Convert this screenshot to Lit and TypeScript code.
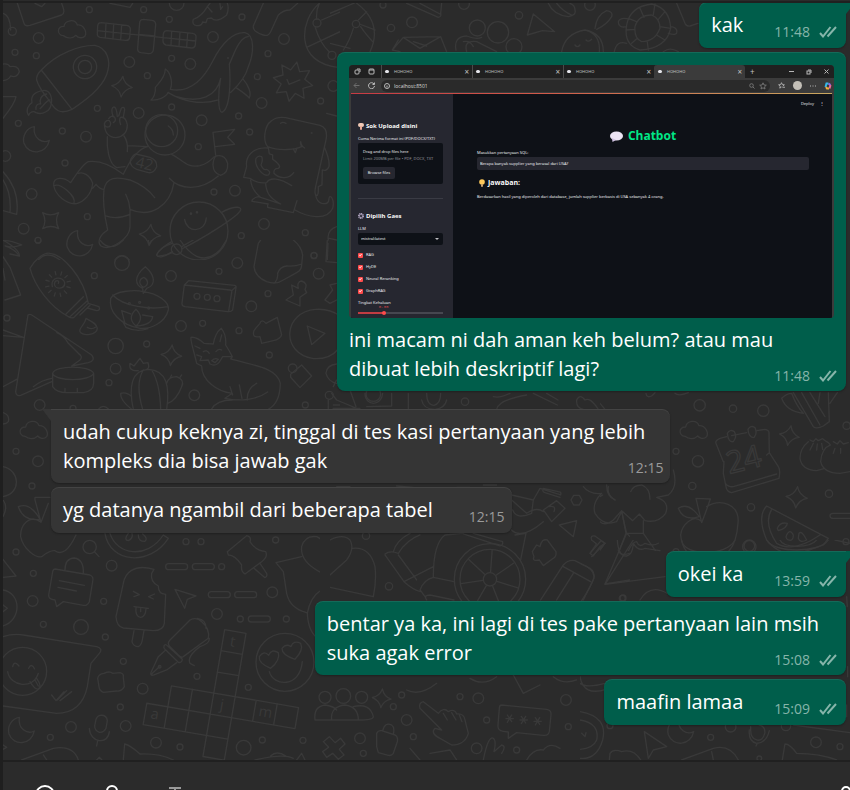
import { LitElement, html, css, svg, nothing } from "lit";
import { customElement, property } from "lit/decorators.js";

type Dot = [number, number, number?];

/** One region of the wallpaper, drawn at three units to the pixel. */
interface Region {
  x: number;
  y: number;
  w: number;
  h: number;
  paths: string[];
  dots: Dot[];
  stars?: [number, number, number, number?][];
  moons?: [number, number][];
  clouds?: [number, number][];
  pills?: [number, number][];
}

const spokes = (cx: number, cy: number, a: number, b: number, n: number) =>
  Array.from({ length: n }, (_, i) => {
    const t = (i * 2 * Math.PI) / n + 0.3;
    const c = Math.cos(t);
    const s = Math.sin(t);
    return `M${(cx + a * c).toFixed(1)} ${(cy + a * s).toFixed(1)}L${(cx + b * c).toFixed(1)} ${(cy + b * s).toFixed(1)}`;
  }).join("");

const burst = (cx: number, cy: number, a: number, b: number, n: number) =>
  "M" +
  Array.from({ length: n * 2 }, (_, i) => {
    const t = ((i + 0.5) * Math.PI) / n - Math.PI / 2;
    const r = i % 2 ? b : a;
    return `${(cx + r * Math.cos(t)).toFixed(1)} ${(cy + r * Math.sin(t)).toFixed(1)}`;
  }).join("L") +
  "Z";

const REGIONS: Region[] = [
  {
    x: 0,
    y: 0,
    w: 340,
    h: 260,
    paths: [
      // rocket
      "M124 210C170 160 240 135 285 136C325 145 330 185 324 210C315 260 260 300 216 328C180 345 165 330 150 305C130 280 115 260 110 240Q108 225 124 210L216 328",
      "M132 271C100 275 92 290 96 308C84 315 76 332 86 346C90 335 100 332 108 338C125 345 152 335 154 310C158 285 145 270 132 271M140 282C122 285 118 300 122 312C112 310 106 318 108 328M150 300C138 302 132 316 120 326",
      // satellite
      "M303 68L380 76Q392 78 391 90L389 112Q388 122 376 121L300 112Q291 110 292 100L293 78Q294 68 303 68M318 70L316 113M341 72L339 116M365 75L362 119M292 92L490 113M500 92L578 100Q590 102 588 114L586 134Q585 144 575 144L498 135Q489 132 489 122L490 102Q492 92 500 92M515 94L513 136M540 97L537 139M563 99L560 142M490 113L587 123",
      "M430 58L456 61Q468 63 467 75L460 150Q458 161 446 161L423 158Q412 156 413 145L419 68Q420 58 430 58M415 103L465 108",
      // whale
      "M511 268C570 280 610 240 640 180C665 130 700 95 735 98C765 105 762 160 745 200C735 240 705 265 691 278M511 268C520 245 510 215 496 207C495 235 475 250 466 262C468 280 460 295 453 300C475 302 500 290 504 277C540 300 600 318 655 300M530 290C600 310 650 290 662 235C655 270 652 335 666 337C692 325 692 240 688 192C700 170 715 112 745 110M730 238C745 255 755 280 748 294C735 280 715 268 708 263",
      burst(879, 245, 60, 36, 8),
      "M861 238L867 253L900 240",
      // beach ball
      "M958 10C900 60 880 190 1020 203M920 142L1020 95M965 60L1020 36M945 80Q960 130 988 156M950 57Q948 30 958 10",
      "M790 10L760 78Q758 95 790 105Q805 110 812 95L835 45Q850 30 870 30L893 10",
      "M622 20Q605 50 580 58Q575 75 590 77Q605 78 608 66L618 68L622 56L634 54Q650 70 680 45Q688 25 682 10M630 10L622 20L636 36M660 10L662 28L668 20",
      "M52 10L72 70Q75 80 90 76L185 45Q195 40 190 25L185 10M105 10L125 20L135 10M330 10L390 22L398 10",
      // astronaut
      "M505 378Q520 388 520 405M322 410C320 440 325 490 350 503L375 500M372 408Q385 425 382 455M382 437L443 440C420 445 395 470 370 523C340 500 300 480 265 485Q250 490 212 548C190 530 160 530 161 555C165 585 200 615 230 611C250 605 275 585 278 550C270 525 250 515 235 520M161 558C180 545 230 590 222 609M278 565L288 553Q300 568 312 568C308 600 312 640 323 690C300 705 290 725 303 738C330 755 390 715 390 680L390 628C388 600 380 590 377 583M312 568C320 530 350 530 390 540Q440 560 464 593M317 648Q350 660 390 643M390 628C450 655 510 620 522 548M508 535C540 570 600 575 655 528M515 463C550 480 560 505 600 497Q625 490 643 470",
      "M313 372Q315 412 348 413Q382 408 382 375Q378 350 362 352Q356 358 362 374M340 350Q330 325 342 321Q350 322 352 350M356 348L364 325Q372 318 374 328L370 352M313 372Q318 358 328 362Q336 372 328 380Q316 384 313 372M326 356Q334 344 344 352Q350 362 340 368",
      "M408 462L450 472Q472 480 470 500Q462 520 445 518L410 508Q390 500 391 482Q398 464 408 462",
      "M647 465L639 397L704 388L683 412L704 433L645 440M648 468Q675 462 683 490Q685 520 662 526Q640 520 639 495Q640 475 648 468",
      // planet
      "M665 637C700 618 725 618 722 630C715 650 600 720 545 747M515 725C480 745 465 765 472 768C485 770 505 762 517 758M554 658C560 700 615 700 619 654",
      // dinosaur holding a speech balloon
      "M803 440C790 425 790 380 815 362C830 350 850 350 870 356L960 376C978 382 982 400 978 420L947 560Q942 585 950 587Q956 587 955 560L966 555L967 510Q980 515 987 500Q990 480 974 443M803 440C840 455 890 448 905 440Q900 430 902 425Q905 440 914 444M880 447L886 458L891 444M842 370Q848 364 858 370M803 444C760 440 735 470 740 500L731 532L750 535C770 550 785 550 800 548M805 442L808 462L818 465L818 478L828 485Q845 500 835 505Q820 505 822 520C840 540 870 535 881 518M800 548C810 530 840 535 875 557M797 552C800 580 810 595 842 612L775 590Q755 595 756 604L805 612M752 540Q755 570 780 590M803 612V622L880 638L891 602M885 630C920 650 980 665 998 625C1005 600 990 580 987 595Q988 615 965 610Q950 605 947 585",
      "M768 475C762 500 790 530 805 525Q815 515 800 508Q790 512 783 495Q790 480 785 470Q775 465 768 475",
      "M9 192Q25 190 30 200Q55 195 58 215Q50 235 32 228Q25 240 9 242M9 290L48 290Q45 310 9 355M9 515Q60 570 50 643L9 632M9 540Q35 580 30 637M9 722Q30 720 65 735Q40 745 15 738Q45 748 58 768M9 40Q30 45 32 90M115 780Q140 750 180 780M345 780Q365 755 388 780M985 720Q980 690 1010 680M988 715L1010 720M984 730L982 780M980 340L1010 348",
    ],
    dots: [
      [268, 29], [431, 29], [508, 58], [726, 51], [45, 157], [109, 167], [515, 175], [442, 227], [772, 230], [804, 161],
      [292, 325], [515, 321], [716, 348], [749, 396], [962, 303], [55, 370], [187, 393], [195, 489], [114, 511], [595, 440],
      [642, 576], [262, 650], [724, 707], [916, 698], [942, 767], [114, 721], [116, 114, 16], [388, 186, 16], [571, 192, 16],
      [639, 111, 16], [852, 117, 16], [416, 339, 16], [785, 309, 16], [605, 361, 16], [258, 410, 16], [95, 582, 16],
      [705, 572, 16], [71, 686, 16], [792, 672, 16], [1000, 258, 16], [16, 468, 16], [37, 94, 12], [530, 9, 22], [255, 201, 35],
      [255, 201, 20], [951, 69, 12], [996, 166, 12], [495, 405, 60], [485, 392, 48], [597, 693, 87], [530, 748, 16],
      [573, 641, 2], [591, 637, 2], [684, 174, 1], [935, 399, 1],
    ],
    stars: [[366, 260, 31, 5], [152, 662, 34, 45], [450, 705, 32, 5]],
    moons: [[110, 418], [240, 730]],
    clouds: [[216, 88]],
  },
  {
    x: 0,
    y: 240,
    w: 340,
    h: 260,
    paths: [
      // sun lotion
      "M90 85C100 65 130 35 150 40C190 45 250 110 265 190L222 232Q215 236 205 230C150 200 105 140 90 85M198 222L250 170M210 230L262 182M265 190L297 200Q302 212 290 212L262 204M240 225L270 196M175 130C180 120 165 118 163 132C165 150 195 148 194 128C190 108 150 108 157 140",
      spokes(174, 132, 28, 38, 12),
      "M258 235C255 255 235 265 240 275C250 290 290 285 292 265C290 250 275 245 258 235M262 262Q275 270 286 262",
      // oil lamp
      "M332 175C345 150 410 150 430 155C470 160 510 185 505 210C495 250 450 268 420 265C360 255 325 215 332 175M338 165C370 200 450 210 503 200M430 160L428 145C405 135 400 110 436 80C465 105 470 135 440 145L430 160M430 142C412 130 420 115 432 112C445 120 448 135 430 142M408 258Q380 235 408 208Q435 235 408 258M375 250L365 212L392 222M428 225L458 230Q455 255 410 258M368 245L378 262Q410 278 444 266",
      // game box
      "M566 122L704 136Q710 138 708 144L698 210Q692 216 684 215L555 200Q545 198 546 190L553 135ZM553 135L690 150Q697 152 695 158L686 213M695 152L708 140",
      "M775 10L762 80Q765 110 800 125Q830 135 850 120L890 98Q905 90 905 75L908 45Q905 20 880 0M775 10L782 0M825 128Q835 115 833 100Q840 80 860 78Q885 80 905 72",
      "M875 135L895 145Q890 125 905 123Q925 130 915 148L920 158L900 172V198L858 180L880 165ZM1010 130L990 135L998 150L975 180L990 190L1010 180M982 0L978 65L1010 68",
      "M922 258L975 280L935 314ZM1020 228Q990 205 947 208C850 215 840 340 940 356Q990 358 1012 330",
      // pyramid and drum
      "M84 225L47 455Q48 470 62 466L155 425M84 225Q90 220 100 228L275 345Q288 362 265 368L215 378L240 360Q250 350 235 340L205 310Q190 285 170 278M100 440Q125 420 155 415M158 400V440Q170 458 200 458H250Q280 455 281 430V400M158 400C165 375 270 375 281 400C270 425 165 425 158 400M195 445V456M232 445V456M9 270L70 292M9 287L70 292M9 440L50 418M9 0Q60 30 58 48L30 42M9 50L30 82L62 165L15 180M9 85L15 120",
      // cactus
      "M400 508C385 440 395 390 445 388C500 390 510 440 500 508M428 508Q405 430 430 390M482 508Q480 430 455 390M415 392Q385 395 390 370L402 378L420 355L430 370L444 368Q450 385 440 388M500 430Q505 410 530 410Q555 420 545 440Q530 480 503 490M395 508Q360 480 362 460Q380 455 395 470M510 415L515 405M540 412L545 405",
      // fox
      "M605 378L590 370C585 345 570 300 573 292Q590 290 612 310L640 312Q645 280 664 265Q680 285 677 315Q690 335 697 350L692 357C750 375 830 380 841 430Q840 490 805 508M605 378C605 420 650 455 697 460L675 475C720 485 770 480 803 456M697 480Q650 480 634 508M770 430Q740 445 742 480M690 440L698 465M718 435L726 475M590 345L605 350L600 362L625 360L630 372Q650 382 662 360L668 350L697 350M610 335Q620 328 628 340M648 335Q655 325 665 330M635 362Q645 352 655 358L645 368ZM585 318L600 325M660 305L665 285",
      "M767 265L780 250Q785 235 798 250L832 232L845 285Q840 298 820 302L785 310L780 290Q755 295 762 272Z",
      "M872 403L905 375L935 408L900 443L872 412ZM1010 372Q980 375 978 400Q985 425 1010 430M1000 440L1010 420M985 480V508M1000 495H1020",
      "M9 680C60 690 65 760 9 770M9 518Q30 525 25 545Q20 552 9 552M295 508Q310 490 326 508",
      "M540 0Q600 90 660 30L680 0M517 35Q480 60 470 45Q480 20 517 10M545 20L580 0M300 0Q330 40 370 0M445 0L448 14L455 0M105 780V772H150",
    ],
    dots: [
      [114, 0], [283, 107], [657, 94], [804, 161], [21, 234], [608, 250], [440, 312], [717, 272], [808, 345], [327, 428],
      [916, 495], [942, 46], [48, 634], [96, 738], [366, 69, 22], [513, 108, 16], [712, 69, 16], [754, 199, 16], [956, 101, 16],
      [543, 258, 16], [347, 318, 23], [347, 386, 16], [583, 466, 16], [119, 495, 16], [114, 664, 16], [591, 169, 9],
      [622, 172, 9], [651, 176, 9], [878, 385, 13], [988, 466, 12], [388, 191, 3], [419, 187, 3], [446, 204, 3], [219, 505, 9],
    ],
    stars: [[514, 346, 31, 5]],
    clouds: [[101, 570]],
  },
  {
    x: 0,
    y: 500,
    w: 320,
    h: 260,
    paths: [
      "M123 67C90 40 60 75 62 110C70 150 110 175 125 170Q150 150 165 152Q195 175 228 105M123 67L105 0M123 67L145 10M55 20Q90 5 120 58Q70 65 55 20M9 0Q25 20 9 50",
      "M284 156L297 170M9 178L48 228L9 232M9 270C65 280 65 360 9 378M9 315L22 325L9 335",
      "M165 207L270 225Q282 230 278 245L268 305Q262 318 250 316L190 305L170 320L165 300Q145 298 146 285L158 215Q160 207 165 207M195 210Q195 175 223 174Q252 178 250 220M178 242L253 256M174 262L229 273",
      // ice cream bar
      "M462 208C400 190 375 220 370 250L348 350Q350 380 370 384L460 392Q490 392 493 370L497 283Q475 282 475 258Q450 245 455 220ZM402 392L396 425Q400 440 415 440Q425 435 427 420L432 392M400 274L418 284L402 290M464 282L446 290L460 297M402 320L445 325M408 322Q405 350 422 352Q437 350 438 326M422 325V335",
      "M525 268L588 288L562 298L554 325Z",
      "M682 155L740 107Q755 110 750 125Q765 150 797 155Q805 170 785 185L735 222Q722 215 725 195Q705 165 685 165ZM762 205L795 233Q803 230 800 220L780 190",
      "M315 100C330 190 450 200 505 115L490 105M330 100C350 165 440 180 490 105M385 100Q370 120 385 122Q400 115 396 100M415 105Q415 125 435 124Q445 115 428 102",
      "M905 170L828 188L850 215L860 280Q870 325 920 338M990 230C940 210 900 180 905 140Q915 105 950 110Q980 125 978 145Q980 120 990 110M990 262Q935 270 922 340Q925 400 958 418",
      // fountain pen
      "M510 420L570 360Q590 350 605 365Q630 385 625 415L550 470Q545 475 535 465L510 440Q500 430 510 420M592 355Q620 360 618 385M492 438Q495 430 503 438L547 478Q545 490 535 487L495 448Q490 444 492 438M497 450L475 470L452 520Q452 528 462 525L500 510L530 488M455 522L478 500M628 415Q630 430 600 440Q560 470 570 490L583 497",
      // smiley with heart eyes
      "M808 515C820 560 900 565 907 485M812 505Q775 490 778 470Q792 450 806 466Q815 445 835 458Q842 480 812 505M885 478Q845 465 846 445Q858 430 873 440Q880 420 902 430Q912 450 885 478",
      // laughing balloon
      "M9 410Q40 400 70 405L290 440Q310 446 298 460L273 490L262 560Q245 640 170 640L9 618M38 500Q43 480 57 498M86 505Q94 487 104 507M23 515C30 560 100 570 115 520M90 545Q105 570 115 567Q127 559 110 535M105 540L115 558M155 585L168 602L192 575M180 602L215 575M172 600L200 572",
      "M293 535Q295 522 312 520Q330 512 338 520L360 518Q372 520 370 532L373 560Q365 575 350 573L310 577Q298 572 297 560Z",
      "M300 646Q320 644 322 662L318 685Q312 698 298 697Q284 692 284 678L288 658Q292 647 300 646M268 685C270 730 325 735 328 695M293 722L290 738",
      "M65 780L160 745Q220 735 235 780M130 765L140 780M370 780L374 732Q390 735 420 762Q480 760 520 780M765 780Q850 760 880 775M812 768Q830 750 858 768M890 780L905 760L915 780M9 735L20 742L9 748M290 780L298 772L306 780",
    ],
    dots: [
      [48, 156], [100, 220], [311, 304], [130, 373], [316, 411], [370, 484], [361, 621], [151, 712], [540, 741], [591, 529],
      [745, 562], [787, 720], [909, 721], [721, 357], [859, 357], [665, 200], [558, 125], [603, 125], [827, 120],
      [335, 197, 16], [98, 303, 16], [243, 381, 22], [428, 566, 16], [213, 681, 16], [377, 678, 16], [468, 728, 16],
      [731, 743, 22], [817, 277, 16], [651, 342, 16], [269, 141, 20], [479, 500, 4], [855, 487, 87], [68, 514, 72],
    ],
    moons: [[65, 690]],
    pills: [[497, 191], [577, 191], [625, 275], [704, 275], [745, 348]],
  },
  {
    x: 330,
    y: 380,
    w: 300,
    h: 221,
    paths: [
      "M5 40L20 60L80 85M60 30L78 80M9 85H90M185 40V78L110 80M235 40V88M275 60Q280 88 315 88Q345 85 350 60M290 40Q290 75 312 76Q332 72 332 40M105 40C105 80 155 80 158 40M490 50Q510 55 540 40M500 88Q505 60 590 45M610 40L682 75M650 40L684 60M740 60Q750 40 765 60Q780 50 805 88M740 60Q738 85 760 88",
      // unicycle wheel and runner
      spokes(480, 598, 22, 88, 7),
      "M165 522Q180 510 205 520Q230 480 270 465M190 515Q200 480 240 460M205 525L260 600M165 525L222 605L310 560M222 605Q250 630 272 635M310 590Q310 490 345 465L400 460M270 630Q280 600 310 592L372 605M272 632L285 650M290 660Q280 645 300 645L372 660M400 462L510 498Q520 495 518 485L430 460M555 465L588 460L572 540",
      "M0 480Q40 460 60 480Q75 505 50 540L0 585M68 505Q120 500 135 560Q140 600 130 650L0 622",
      "M545 360L590 400Q620 380 640 395M545 345L610 360L630 325L692 345Q695 335 685 335L640 325Q635 335 645 338L690 352M548 390Q560 420 605 400M545 450Q575 480 640 425M610 360L605 400M640 390L680 362L705 385L665 425ZM655 380Q680 375 672 395",
      "M688 435L740 422L730 470ZM723 360L731 346H748L756 360L748 375H731Z",
      "M607 515L620 495L630 500Q635 475 652 480L678 515Q680 530 670 535L640 557L628 540Q605 545 612 530Z",
      "M785 480Q780 465 795 468L825 490L810 500L790 528L780 520L800 492Z",
      "M632 660L700 555Q715 538 735 542L780 565Q795 575 792 595L760 660M700 560L782 605M680 660L730 580",
      "M825 612L890 460L900 470M825 612L900 600M760 320Q780 345 815 340Q785 370 795 400Q820 440 860 425L875 395L890 460M835 320Q830 345 855 360M865 510Q870 530 900 520M20 320H60M200 318L250 322M380 322H420M460 315H500",
    ],
    dots: [[405, 65, 11], [108, 467, 11], [177, 619, 11], [480, 598, 107], [480, 598, 90], [480, 598, 20], [877, 655, 9], [130, 42, 22]],
  },
  {
    x: 600,
    y: 370,
    w: 250,
    h: 181,
    paths: [
      // calendar
      "M380 200L360 205Q342 212 350 225L370 275M395 197L440 188M470 182L495 178Q508 180 507 190L508 248L535 290Q542 300 537 325L395 368Q380 366 378 350L370 310L372 275M376 340Q385 352 400 350L530 312M508 248L500 255",
      "M382 190Q390 176 403 185Q412 200 400 215Q385 218 382 190M444 178Q452 164 465 173Q473 188 462 203Q446 202 444 178",
      // apple
      "M305 458L288 385L331 387Q320 420 305 458M235 415Q265 395 298 440Q250 455 235 415M305 455C280 430 245 465 242 495Q245 530 265 550M320 410C360 385 420 400 414 460Q410 520 385 545",
      // melon slice
      "M500 408Q470 440 500 510Q540 560 600 550L670 525L685 505ZM515 418Q490 460 530 520Q580 550 660 495M532 475Q540 455 562 460Q560 475 535 482ZM560 495Q570 475 580 495Q580 515 565 510Q555 505 560 495M597 490Q605 480 620 510Q600 520 595 505Z",
      // dumplings
      "M625 215Q600 235 600 265Q605 300 650 302L672 296M680 215Q690 220 690 225M630 210L640 215L648 206L655 212L668 206L680 215M640 220L630 240M652 222L650 240M665 220L668 238M692 225Q665 235 662 275Q670 310 720 310L750 305M700 215L712 222L720 212L730 222L745 218M705 235L700 250M722 235V250",
      "M545 85Q560 70 575 70Q590 110 610 130Q560 125 545 85M580 68L640 170Q650 178 670 168L688 155L685 68M605 68L660 165M630 68L675 140M655 100L660 68M690 100L712 68M138 70Q140 85 155 78L165 68M225 70Q235 80 265 68",
      "M220 300Q235 350 205 375L170 382Q210 395 197 430Q175 460 135 452L118 432L98 452L65 422L40 450Q15 470 0 455M65 422L78 490H130V452M78 490L35 600M130 490L200 590M92 365Q100 345 125 345Q150 355 150 388M20 345Q20 380 45 390M55 550Q60 570 80 555Q95 515 110 515Q118 535 135 520Q160 530 175 520M0 380L8 375M0 100L15 118M0 510L15 520L0 540M750 430H700Q690 430 690 437Q690 445 700 445H750",
    ],
    dots: [
      [299, 106, 17], [399, 116, 11], [490, 122, 17], [228, 244], [294, 274, 17], [277, 348, 11], [453, 412, 11],
      [448, 530, 20], [687, 371, 11], [740, 167, 11], [738, 515], [228, 545, 9],
    ],
    stars: [[568, 197, 30, 10], [590, 382, 32, 5]],
    clouds: [[281, 180]],
  },
  {
    x: 580,
    y: 540,
    w: 270,
    h: 220,
    paths: [
      "M75 133L160 0M75 133L255 110M112 0Q115 50 140 48Q158 45 160 10Q175 35 195 25L240 32M30 40L65 0M35 50L75 10M0 70Q40 85 42 110Q40 130 0 190M305 0C310 50 440 50 465 0M560 0C580 40 720 40 745 0M600 0C610 25 690 25 710 0M180 180Q210 130 262 160",
      "M0 410Q10 470 78 448M0 430Q20 445 75 430M0 515Q85 530 68 600Q50 660 0 655M0 540Q60 550 50 600Q40 625 0 628M5 580L15 590L18 578",
      "M193 575L260 620L220 630L205 655ZM88 660L90 640Q100 625 125 635Q160 625 182 660M305 660L400 625Q450 612 475 660M400 660L395 635M607 660L615 612Q630 612 650 640Q720 640 770 660M538 555Q555 558 555 578Q548 605 530 600Q512 595 512 570V560M508 570Q505 605 530 610Q560 608 568 572M532 610L528 618M640 555L810 578M765 0L810 10M800 170L802 200M803 380V410M800 495V530",
    ],
    dots: [[129, 174], [508, 18, 16], [392, 592], [708, 607, 16], [780, 620], [90, 557], [452, 560, 16], [618, 558, 14], [538, 655, 7]],
    moons: [[303, 572]],
  },
  {
    x: 330,
    y: 0,
    w: 520,
    h: 52,
    paths: [
      "M0 40Q60 15 75 8M80 10Q160 70 120 155M85 60L110 35M88 72L135 90M70 85Q60 120 40 150M0 130L60 145M92 80Q105 100 128 125",
      "M230 10L325 52Q335 50 332 40L335 10M270 10L330 42M610 42L674 95L637 92L592 105ZM187 150L220 112L332 110L350 155M220 112L270 145L332 110M250 125L290 138M187 150L210 155M205 120L188 148",
      "M378 150Q370 110 410 108Q440 120 455 112M410 155Q400 120 440 125L500 155M400 125Q420 120 430 140M655 10Q670 45 715 50Q740 45 735 30Q735 15 720 10M680 10Q700 35 725 45",
      // diver and turtle
      "M795 85Q800 45 830 32Q850 35 845 50Q830 75 800 88M695 155Q705 100 765 90Q820 100 820 155M770 92Q812 105 808 155M735 135Q742 145 750 135M768 120Q775 128 785 118",
      "M890 75Q900 20 965 12Q1020 25 1022 85Q1010 145 930 150Q880 135 890 75M915 80Q925 45 965 45Q990 55 990 85Q975 125 935 125Q912 115 915 80M930 25L942 52M975 12L970 45M1005 35L985 58M1022 85L990 80M1005 120L980 105M955 150L952 125M905 130L922 115M888 90L915 88M895 55L920 65M890 80Q865 85 865 65Q872 50 898 58M1015 100Q1045 110 1040 90Q1035 80 1022 80M890 130Q860 120 853 155M1040 10L1065 70Q1070 80 1080 78L1104 70M1000 155Q1020 140 1045 155",
    ],
    dots: [[78, 72, 11], [183, 84, 11], [246, 67, 16], [159, 15, 9], [402, 12, 16], [442, 84, 24], [504, 97, 32], [552, 140, 24], [567, 46, 11], [780, 15, 16]],
  },
  {
    x: 310,
    y: 670,
    w: 270,
    h: 90,
    paths: [
      // group of people
      "M15 150Q10 110 45 105Q70 108 80 120M65 150Q60 110 105 105Q145 110 145 150ZM15 150H65M130 110Q180 98 190 140Q190 150 145 150",
      "M40 215L58 200L75 218L92 205L105 222L88 238L102 255L85 268L68 250L50 262L38 245L56 232ZM200 230V190Q205 180 215 182L255 195Q265 200 262 215L250 250Q245 258 235 256L205 248ZM218 182Q225 155 245 165Q255 172 250 192",
      // pointing hand
      "M340 95L385 130Q400 110 415 125Q435 115 440 132Q462 130 465 150L475 190Q465 225 425 225L390 205Q360 190 375 175L395 180L330 115Q325 98 340 95M400 130L412 150M425 128L438 150M448 135L456 155",
      // password balloon
      "M575 105L710 118Q725 120 723 135L718 185Q715 198 700 196L620 188L595 205V186L580 184Q562 182 564 165L568 115Q568 105 575 105M592 135L605 155M605 135L592 157M588 146H610M634 139L647 159M647 139L634 161M630 150H652M676 143L689 163M689 143L676 165M672 154H694",
      "M520 270Q535 195 550 205Q560 212 552 245L575 225Q590 228 575 250M650 270Q670 235 700 240Q720 215 750 235M290 60Q330 80 380 40M480 25Q520 50 560 20M610 15L640 70L690 45M730 20Q760 45 800 30M300 235L330 270M360 250L420 240L440 270",
    ],
    dots: [[100, 78, 22], [45, 82, 18], [155, 82, 18], [250, 110], [290, 150, 16], [310, 200], [505, 85, 16], [530, 150], [500, 235, 16], [620, 240], [150, 205, 16], [160, 250], [275, 75], [450, 80], [768, 90, 16], [775, 170]],
    stars: [[215, 85, 28, 5]],
  },
];

const star = ([x, y, r, a = 0]: [number, number, number, number?]) => svg`<path
  transform="translate(${x} ${y}) rotate(${a})"
  d=${`M0 ${-r}Q${r * 0.2} ${-r * 0.25} ${r} 0Q${r * 0.25} ${r * 0.2} 0 ${r}Q${-r * 0.2} ${r * 0.25} ${-r} 0Q${-r * 0.25} ${-r * 0.2} 0 ${-r}`}/>`;

@customElement("chat-wallpaper")
export class ChatWallpaper extends LitElement {
  static styles = css`
    :host { display: block; overflow: hidden; }
    .art { display: block; fill: none; stroke: #393939; stroke-width: 4; stroke-linecap: round; stroke-linejoin: round; }
    .letter { font: 400 44px "Open Sans", sans-serif; fill: #393939; stroke: none; }
    .small { font-size: 46px; }
    .big { font-size: 92px; fill: none; stroke: #393939; }
  `;

  render() {
    return html`<svg class="art" width="850" height="760" aria-hidden="true">
      ${REGIONS.map(
        (r, i) => svg`<svg x=${r.x} y=${r.y} width=${r.w} height=${r.h} overflow="hidden">
          <g transform="scale(.3333)">
            ${r.paths.map((d) => svg`<path d=${d}/>`)}
            ${r.dots.map(([x, y, q = 9]) => svg`<circle cx=${x} cy=${y} r=${q}/>`)}
            ${(r.stars ?? []).map(star)}
            ${(r.moons ?? []).map(([x, y]) => svg`<path transform="translate(${x} ${y})" d="M-7 -38C-30 -35 -44 -10 -38 12C-24 50 30 45 38 3C18 14 -12 -2 -7 -38Z"/>`)}
            ${(r.clouds ?? []).map(([x, y]) => svg`<path transform="translate(${x} ${y})" d="M-26 19C-46 17 -46 -10 -24 -9C-21 -28 9 -33 16 -13C34 -15 46 7 39 20C30 30 16 24 12 18C0 30 -16 26 -26 19"/>`)}
            ${(r.pills ?? []).map(([x, y]) => svg`<rect x=${x} y=${y} width="66" height="18" rx="9"/>`)}
            ${i === 0 ? svg`<text class="letter small" transform="translate(404 500) rotate(14)">42</text>` : nothing}
            ${i === 2
              ? svg`<g transform="translate(674 389) rotate(9.7)">
                  <path d="M0 0H65V386H0ZM0 64H65M0 129H65M-129 193H258V257H-193M-129 193V322M-65 193V322M129 193V257M193 193V257M-193 257V322H65"/>
                  <text class="letter" x="22" y="46">t</text><text class="letter" x="24" y="238">j</text>
                  <text class="letter" x="142" y="238">m</text><text class="letter" x="-176" y="300">a</text></g>`
              : nothing}
            ${i === 4 ? svg`<text class="letter big" transform="translate(388 312) rotate(-14)">24</text>` : nothing}
          </g>
        </svg>`,
      )}
    </svg>`;
  }
}

const TABS = [false, false, false, true];

@customElement("shared-screen")
export class SharedScreen extends LitElement {
  static styles = css`
    :host { display: block; font: 4px/6px "Noto Sans", sans-serif; color: #ececf0; }
    .window { height: 253px; display: flex; flex-direction: column; border-radius: 4px; overflow: hidden; background: #3b3b3b; }
    .tabs { height: 13px; display: flex; align-items: center; background: #202020; padding: 0 5px; }
    .tabs svg, .bar svg { display: block; flex: none; fill: none; stroke: #b8b8b8; stroke-width: 1; }
    .lead { display: flex; gap: 7px; width: 27px; }
    .tab { display: flex; align-items: center; width: 91px; height: 13px; padding: 0 3px; box-sizing: border-box; border-left: 1px solid #4a4a4a; }
    .tab.on { background: #3b3b3b; border-color: #3b3b3b; border-radius: 3px 3px 0 0; }
    .fav { width: 4px; height: 3px; border-radius: 2px; background: #e4e4ea; margin-right: 5px; }
    .name { flex: 1; color: #c0c0c0; }
    .icon { all: unset; color: #c0c0c0; font-size: 8px; line-height: 8px; }
    .plus { margin-left: 5px; }
    .winbtns { margin-left: auto; display: flex; gap: 12px; align-items: center; }
    .bar { height: 15px; display: flex; align-items: center; padding: 0 2px 0 4px; gap: 8px; }
    .address { flex: 1; height: 12px; display: flex; align-items: center; gap: 4px; padding: 0 3px; border-radius: 6px; background: #2a2a2a; margin-left: -2px; }
    .url { all: unset; flex: 1; font: 5px/8px "Open Sans", sans-serif; color: #dcdcdc; }
    .avatar { width: 9px; height: 9px; border-radius: 5px; background: #c4c0b8; }
    .page { flex: 1; display: flex; margin: 0 2px; background: #0e1117; border-top: 1px solid; border-image: linear-gradient(90deg, #c83a44, #d05a4a 40%, #c8a860) 1; }
    .side { width: 102px; box-sizing: border-box; padding: 28px 10px 0 7px; background: #262730; }
    .h { display: flex; align-items: center; gap: 2px; margin: 0; font: 700 6px/8px "Open Sans", sans-serif; color: #fafafa; }
    .label { display: block; margin: 6px 0 2px; line-height: 5px; white-space: nowrap; }
    .drop { height: 41px; box-sizing: border-box; padding: 6px 5px; border-radius: 2px; background: #0e1117; white-space: nowrap; }
    .drop p { margin: 0; }
    .drop .hint { color: #94959b; margin: 1px 0 5px; }
    .browse { all: unset; display: block; width: 32px; height: 12px; border-radius: 2px; background: #262730; text-align: center; font: 4px/12px "Noto Sans", sans-serif; }
    .rule { border: 0; border-top: 1px solid #3a3b44; margin: 14px 0 13px; }
    .select { appearance: none; display: block; width: 85px; height: 12px; margin: 0 0 4px; padding: 0 3px; border: 0; border-radius: 2px; background: #0e1117; color: inherit; font: 4px/12px "Noto Sans", sans-serif; }
    .pick { display: grid; }
    .pick > * { grid-area: 1 / 1; }
    .arrow { align-self: start; justify-self: end; width: 4px; height: 2px; margin: 5px 4px 0 0; background: #c0c0c4; clip-path: polygon(0 0, 100% 0, 50% 100%); }
    .check { display: flex; align-items: center; gap: 3px; height: 12px; line-height: 12px; }
    .box { appearance: none; width: 5px; height: 5px; margin: 0; border-radius: 1px; background: #ff4b4b; display: grid; place-items: center; }
    .box::after { content: ""; width: 3px; height: 3px; background: #fff; clip-path: polygon(0 50%, 35% 100%, 100% 20%, 80% 0, 35% 65%, 15% 35%); }
    .value { display: block; width: 51px; text-align: center; color: #d8434a; font: 4px/5px "Liberation Mono", monospace; }
    .tune { margin: 3px 0 0; }
    .range { appearance: none; display: block; width: 85px; height: 5px; margin: 0; background: linear-gradient(90deg, #c23c42 30%, #464750 30%) center / 100% 2px no-repeat; }
    .range::-webkit-slider-thumb { appearance: none; width: 4px; height: 4px; border-radius: 2px; background: #ff4b4b; }
    .main { flex: 1; padding: 7px 23px 0 24px; }
    .top { display: flex; justify-content: flex-end; gap: 6px; margin-right: -15px; }
    .plain { all: unset; }
    .title { display: flex; align-items: center; justify-content: center; gap: 5px; margin: 21px 0 6px; font: 700 12px/16px "Open Sans", sans-serif; color: #00e887; }
    .ask { display: block; width: 100%; height: 13px; box-sizing: border-box; margin: 0; border: 0; border-radius: 2px; padding: 0 3px; background: #262730; color: inherit; font: 4px/12px "Noto Sans", sans-serif; }
    .answer-h { margin: 8px 0 6px; font-size: 7px; line-height: 10px; gap: 3px; padding-left: 2px; }
    .answer { margin: 0; }
  `;

  render() {
    return html`<div class="window">
      <div class="tabs">
        <div class="lead">
          <svg width="7" height="7" viewBox="0 0 7 7"><rect x="1" y="2" width="4" height="4" rx="1" /><path d="M3 1H6V4" /></svg>
          <svg width="7" height="7" viewBox="0 0 7 7"><rect x="1" y="1" width="5" height="5" rx="1" /><path d="M1 2H6" /></svg>
        </div>
        ${TABS.map(
          (on) => html`<div class="tab ${on ? "on" : ""}">
            <span class="fav"></span><span class="name">HOHOHO</span><button class="icon" aria-label="Close tab">×</button>
          </div>`,
        )}
        <button class="icon plus" aria-label="New tab">+</button>
        <div class="winbtns">
          <svg width="5" height="5" viewBox="0 0 5 5"><path d="M0 2.5H5" /></svg>
          <svg width="6" height="6" viewBox="0 0 6 6"><rect x="1" y="2" width="3" height="3" /><path d="M2 1H5V4" /></svg>
          <svg width="5" height="5" viewBox="0 0 5 5"><path d="M.5 .5L4.500 4.500M4.500 .5L.5 4.500" /></svg>
        </div>
      </div>
      <div class="bar">
        <svg width="7" height="7" viewBox="0 0 7 7" opacity=".4"><path d="M6.500 3.500H1M3.500 1L1 3.500L3.500 6" /></svg>
        <svg width="7" height="7" viewBox="0 0 7 7"><path d="M6 2A3 3 0 1 0 6.500 4M6.500 .5V2.500H4.500" /></svg>
        <div class="address">
          <svg width="6" height="6" viewBox="0 0 6 6"><circle cx="3" cy="3" r="2.500" /><path d="M3 2.500V4.500" /></svg>
          <input class="url" aria-label="Address" value="localhost:8501" />
          <svg width="6" height="6" viewBox="0 0 6 6" opacity=".5"><circle cx="2.500" cy="2.500" r="1.800" /><path d="M4 4L5.500 5.500" /></svg>
          <svg width="8" height="8" viewBox="0 0 8 8" opacity=".5"><path d="M4 .8L5 3L7.300 3.200L5.500 4.800L6 7L4 5.800L2 7L2.500 4.800L.7 3.200L3 3Z" /></svg>
        </div>
        <svg width="7" height="7" viewBox="0 0 8 8"><path d="M4 .8L5 3L7.300 3.200L5.500 4.800M4 5.800L2 7L2.500 4.800L.7 3.200L3 3L4 .8M5 6H8" /></svg>
        <span class="avatar"></span>
        <svg width="6" height="4" viewBox="0 0 6 4"><path d="M0 2H1M2.500 2H3.500M5 2H6" /></svg>
        <svg width="8" height="8" viewBox="0 0 8 8"><path d="M1.500 5L2.500 1.500H4.500" stroke="#35b8e8" stroke-width="2" /><path d="M4.500 1.500L6.500 3" stroke="#8a6af0" stroke-width="2" /><path d="M6.500 3L5.500 6.500" stroke="#f06a9a" stroke-width="2" /><path d="M5 6.500H3L2 5" stroke="#f0b040" stroke-width="2" /></svg>
      </div>
      <div class="page">
        <div class="side">
          <h3 class="h">
            <svg width="6" height="7" viewBox="0 0 6 7"><rect x="0" y="0" width="6" height="4" rx="2" fill="#f0c8b4" /><rect x="2" y="3" width="2" height="4" rx="1" fill="#e8a894" /></svg>
            Sok Upload disini
          </h3>
          <span class="label">Cuma Nerima format ini (PDF/DOCX/TXT)</span>
          <div class="drop">
            <p>Drag and drop files here</p>
            <p class="hint">Limit 200MB per file • PDF, DOCX, TXT</p>
            <button class="browse">Browse files</button>
          </div>
          <hr class="rule" />
          <h3 class="h">
            <svg width="6" height="6" viewBox="0 0 6 6"><circle cx="3" cy="3" r="2" fill="none" stroke="#b4a8c4" stroke-width="2" stroke-dasharray="1 .4" /></svg>
            Dipilih Gaes
          </h3>
          <label class="label" for="llm">LLM</label>
          <div class="pick"><select class="select" id="llm"><option>mistral:latest</option></select><span class="arrow"></span></div>
          ${["RAG", "HyDE", "Neural Reranking", "GraphRAG"].map(
            (t) => html`<label class="check"><input class="box" type="checkbox" checked />${t}</label>`,
          )}
          <label class="label tune" for="temp">Tingkat Kehaluan</label>
          <span class="value">0.30</span>
          <input class="range" id="temp" type="range" min="0" max="100" value="30" />
        </div>
        <div class="main">
          <div class="top"><button class="plain">Deploy</button><button class="plain" aria-label="Menu">⋮</button></div>
          <h1 class="title">
            <svg width="13" height="11" viewBox="0 0 13 11"><ellipse cx="6.500" cy="5" rx="6.500" ry="4.500" fill="#ece4f4" /><path d="M2 7L2.500 11L6 9Z" fill="#cfc0e0" /></svg>
            Chatbot
          </h1>
          <label class="label" for="ask">Masukkan pertanyaan SQL:</label>
          <input class="ask" id="ask" value="Berapa banyak supplier yang berasal dari USA?" />
          <h2 class="h answer-h">
            <svg width="6" height="8" viewBox="0 0 6 8"><circle cx="3" cy="3" r="2.800" fill="#fcc85a" /><rect x="2" y="5" width="2" height="3" rx="1" fill="#c8a070" /></svg>
            Jawaban:
          </h2>
          <p class="answer">Berdasarkan hasil yang diperoleh dari database, jumlah supplier berbasis di USA sebanyak 4 orang.</p>
        </div>
      </div>
    </div>`;
  }
}

@customElement("chat-bubble")
export class ChatBubble extends LitElement {
  @property() text = "";
  @property() time = "";
  @property({ type: Boolean, reflect: true }) out = false;
  @property({ type: Boolean, reflect: true }) tail = false;
  @property({ type: Boolean, reflect: true }) photo = false;

  static styles = css`
    :host { display: block; position: relative; align-self: flex-start; box-sizing: border-box; min-height: 46px; padding: 8px 7px 8px 12px; border-radius: 8px; background: #353535; box-shadow: 0 1px 2px #0004, inset 0 1px #ffffff14; color: #fff; font: 20px/29px "Open Sans", sans-serif; }
    :host([out]) { align-self: flex-end; background: #005e4b; padding-right: 9px; }
    :host([tail]:not([out])) { border-top-left-radius: 0; }
    :host([tail][out]) { border-top-right-radius: 0; }
    :host([tail])::before { content: ""; position: absolute; top: 0; right: 100%; width: 9px; height: 12px; background: inherit; clip-path: polygon(0 0, 100% 0, 100% 100%); }
    :host([tail][out])::before { right: auto; left: 100%; clip-path: polygon(0 0, 100% 0, 0 100%); }
    :host([photo]) { width: 509px; padding-top: 13px; }
    .line { margin: 0 18px 0 0; white-space: nowrap; }
    .last { display: flex; justify-content: space-between; gap: 36px; white-space: nowrap; }
    :host([out]) .last { gap: 31px; }
    .meta { align-self: end; display: flex; align-items: center; gap: 9px; font-size: 14px; line-height: 14px; color: #9a9a9a; }
    :host([out]) .meta { color: #86b5aa; }
    .ticks { display: block; fill: none; stroke: currentColor; stroke-width: 2; }
    .shot { display: block; margin: 0 3px 7px 0; }
  `;

  render() {
    const lines = this.text.split("\n");
    const last = lines.pop();
    return html`${this.photo ? html`<shared-screen class="shot"></shared-screen>` : nothing}
      ${lines.map((t) => html`<div class="line">${t}</div>`)}
      <div class="last">
        <span>${last}</span>
        <span class="meta"><time>${this.time}</time>${this.out
            ? html`<svg class="ticks" width="18" height="12" viewBox="0 0 18 12" role="img" aria-label="Delivered"><path d="M1 7L4 10.500L11.500 1M8.500 10.500L17 1" /></svg>`
            : nothing}</span>
      </div>`;
  }
}

@customElement("app-root")
export class AppRoot extends LitElement {
  static styles = css`
    :host { display: flex; flex-direction: column; height: 100vh; box-sizing: border-box; overflow: hidden; border-left: 3px solid #1f1f1f; background: #2b2b2b; }
    .head { flex: none; height: 2px; box-sizing: border-box; border-bottom: 1px solid #202020; }
    .chat { position: relative; flex: 1; min-height: 0; overflow: hidden; border-top: 1px solid #202020; }
    .paper { position: absolute; inset: -3px 0 0 -3px; }
    .log { position: relative; display: flex; flex-direction: column; gap: 18px; padding: 0 4px 0 48px; margin-top: -1px; }
    .group { display: flex; flex-direction: column; gap: 4px; }
    .foot { flex: none; display: flex; align-items: flex-start; gap: 51px; height: 30px; box-sizing: border-box; padding: 23px 0 0 32px; border-top: 2px solid #202020; overflow: hidden; }
    .tool { all: unset; display: block; }
    .tool svg { display: block; fill: none; stroke: #fff; stroke-width: 2; }
    .mic { margin-left: auto; margin-right: -2px; }
    .tool .dim { stroke: #999; }
  `;

  render() {
    return html`<div class="head"></div>
      <main class="chat">
        <chat-wallpaper class="paper"></chat-wallpaper>
        <div class="log">
          <div class="group">
            <chat-bubble out tail text="kak" time="11:48"></chat-bubble>
            <chat-bubble out photo text=${"ini macam ni dah aman keh belum? atau mau\ndibuat lebih deskriptif lagi?"} time="11:48"></chat-bubble>
          </div>
          <div class="group">
            <chat-bubble tail text=${"udah cukup keknya zi, tinggal di tes kasi pertanyaan yang lebih\nkompleks dia bisa jawab gak"} time="12:15"></chat-bubble>
            <chat-bubble text="yg datanya ngambil dari beberapa tabel" time="12:15"></chat-bubble>
          </div>
          <div class="group">
            <chat-bubble out tail text="okei ka" time="13:59"></chat-bubble>
            <chat-bubble out text=${"bentar ya ka, ini lagi di tes pake pertanyaan lain msih\nsuka agak error"} time="15:08"></chat-bubble>
            <chat-bubble out text="maafin lamaa" time="15:09"></chat-bubble>
          </div>
        </div>
      </main>
      <footer class="foot">
        <button class="tool" aria-label="Emoji"><svg width="20" height="20" viewBox="0 0 20 20"><circle cx="10" cy="10" r="9" /></svg></button>
        <button class="tool" aria-label="Attach"><svg width="12" height="20" viewBox="0 0 12 20"><path d="M1 20V6A5 5 0 0 1 11 6V20" /></svg></button>
        <button class="tool" aria-label="Text style"><svg class="dim" width="12" height="20" viewBox="0 0 12 20"><path d="M0 3H12M6 3V20" /></svg></button>
        <button class="tool mic" aria-label="Voice message"><svg width="12" height="20" viewBox="0 0 12 20"><path d="M2 20V6A4 4 0 0 1 10 6V20" /></svg></button>
      </footer>`;
  }
}
